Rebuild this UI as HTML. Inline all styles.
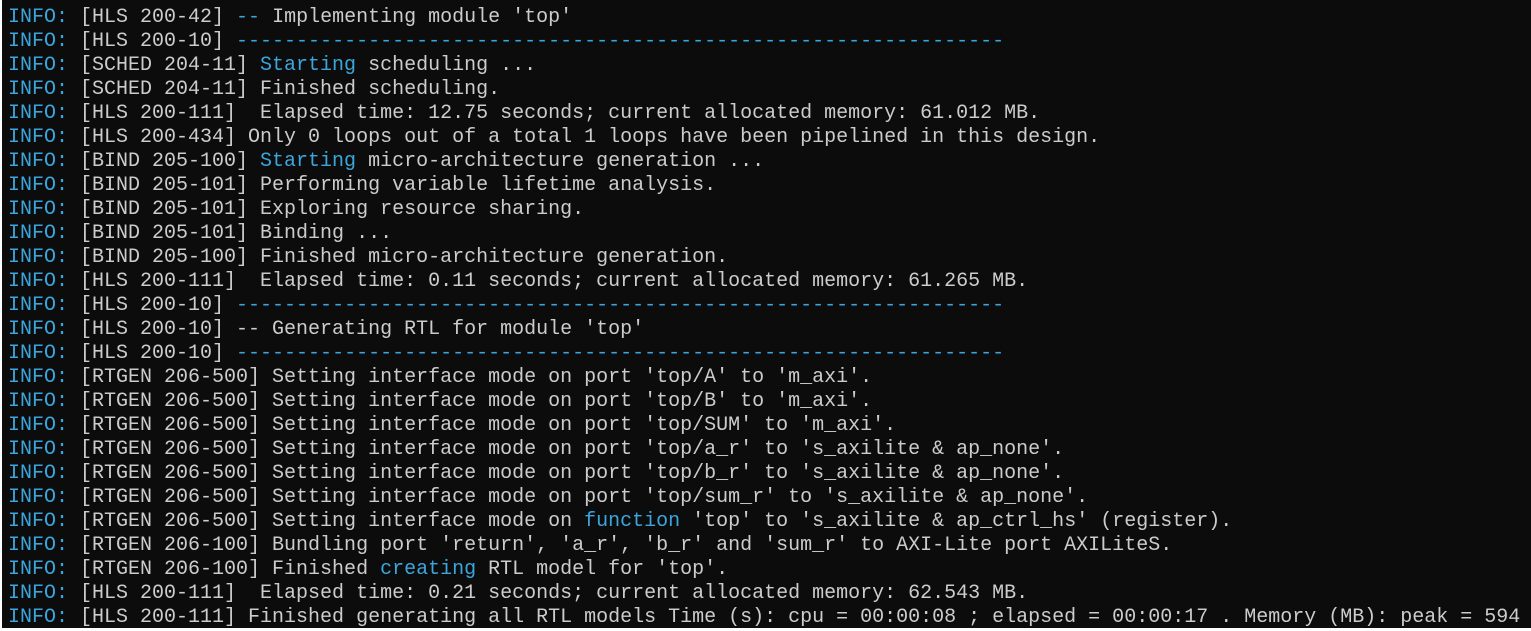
<!DOCTYPE html>
<html><head><meta charset="utf-8"><style>
html,body{margin:0;padding:0}
body{width:1531px;height:631px;background:#fff;overflow:hidden;position:relative}
#t{position:absolute;left:2px;top:0;width:1529px;height:628px;background:#0c0c0c}
pre{margin:0;position:absolute;left:6px;top:6px;font-family:"Liberation Mono",monospace;font-size:20px;line-height:24px;color:#cccccc;white-space:pre}
.c{color:#3aa6dd}
</style></head><body><div id="t"><pre><span class="c">INFO:</span> [HLS 200-42] <span class="c">--</span> Implementing module 'top'
<span class="c">INFO:</span> [HLS 200-10] <span class="c">----------------------------------------------------------------</span>
<span class="c">INFO:</span> [SCHED 204-11] <span class="c">Starting</span> scheduling ...
<span class="c">INFO:</span> [SCHED 204-11] Finished scheduling.
<span class="c">INFO:</span> [HLS 200-111]  Elapsed time: 12.75 seconds; current allocated memory: 61.012 MB.
<span class="c">INFO:</span> [HLS 200-434] Only 0 loops out of a total 1 loops have been pipelined in this design.
<span class="c">INFO:</span> [BIND 205-100] <span class="c">Starting</span> micro-architecture generation ...
<span class="c">INFO:</span> [BIND 205-101] Performing variable lifetime analysis.
<span class="c">INFO:</span> [BIND 205-101] Exploring resource sharing.
<span class="c">INFO:</span> [BIND 205-101] Binding ...
<span class="c">INFO:</span> [BIND 205-100] Finished micro-architecture generation.
<span class="c">INFO:</span> [HLS 200-111]  Elapsed time: 0.11 seconds; current allocated memory: 61.265 MB.
<span class="c">INFO:</span> [HLS 200-10] <span class="c">----------------------------------------------------------------</span>
<span class="c">INFO:</span> [HLS 200-10] -- Generating RTL for module 'top'
<span class="c">INFO:</span> [HLS 200-10] <span class="c">----------------------------------------------------------------</span>
<span class="c">INFO:</span> [RTGEN 206-500] Setting interface mode on port 'top/A' to 'm_axi'.
<span class="c">INFO:</span> [RTGEN 206-500] Setting interface mode on port 'top/B' to 'm_axi'.
<span class="c">INFO:</span> [RTGEN 206-500] Setting interface mode on port 'top/SUM' to 'm_axi'.
<span class="c">INFO:</span> [RTGEN 206-500] Setting interface mode on port 'top/a_r' to 's_axilite &amp; ap_none'.
<span class="c">INFO:</span> [RTGEN 206-500] Setting interface mode on port 'top/b_r' to 's_axilite &amp; ap_none'.
<span class="c">INFO:</span> [RTGEN 206-500] Setting interface mode on port 'top/sum_r' to 's_axilite &amp; ap_none'.
<span class="c">INFO:</span> [RTGEN 206-500] Setting interface mode on <span class="c">function</span> 'top' to 's_axilite &amp; ap_ctrl_hs' (register).
<span class="c">INFO:</span> [RTGEN 206-100] Bundling port 'return', 'a_r', 'b_r' and 'sum_r' to AXI-Lite port AXILiteS.
<span class="c">INFO:</span> [RTGEN 206-100] Finished <span class="c">creating</span> RTL model for 'top'.
<span class="c">INFO:</span> [HLS 200-111]  Elapsed time: 0.21 seconds; current allocated memory: 62.543 MB.
<span class="c">INFO:</span> [HLS 200-111] Finished generating all RTL models Time (s): cpu = 00:00:08 ; elapsed = 00:00:17 . Memory (MB): peak = 594</pre></div></body></html>
